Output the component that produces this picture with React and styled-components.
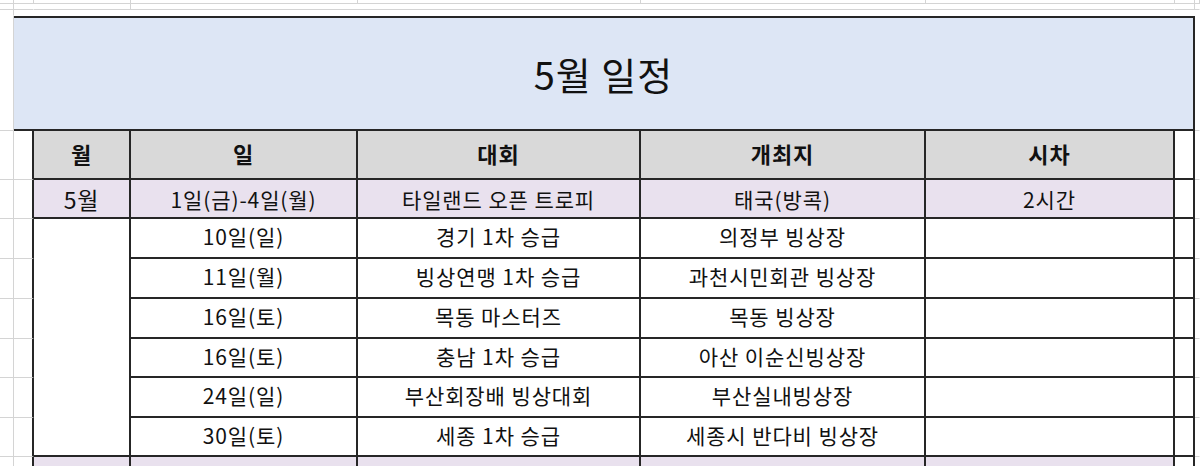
import React from 'react'
import styled, { createGlobalStyle } from 'styled-components'

const GlobalStyle = createGlobalStyle`
  html, body {
    margin: 0;
    padding: 0;
    background: #fff;
    overflow: hidden;
  }
  body {
    font-family: "Noto Sans CJK KR", "Noto Sans", sans-serif;
    color: #111;
  }
`;

const GRID = '#d4d4d4';
const LINE = '#262626';

const Sheet = styled.div`
  display: grid;
  width: 1200px;
  height: 466px;
  overflow: hidden;
  grid-template-columns: 14px 20px 97px 227px 283px 285px 249px 20px 1fr;
  grid-template-rows: 4px 6px 6px 115px 49px 39px 40px 40px 40px 39px 40px 39px 40px;
`;

const Cell = styled.div`
  box-sizing: border-box;
  display: flex;
  align-items: center;
  justify-content: center;
  min-width: 0;
  overflow: hidden;
  white-space: nowrap;
  padding-bottom: ${p => p.$lift || 0}px;
  background: ${p => p.$bg || '#fff'};
  border-right: ${p => (p.$r === LINE ? 2 : 1)}px solid ${p => p.$r || 'transparent'};
  border-bottom: ${p => (p.$b === LINE ? 2 : 1)}px solid ${p => p.$b || 'transparent'};
  grid-column: span ${p => p.$span || 1};
  grid-row: span ${p => p.$rows || 1};
  font-size: 21px;
  letter-spacing: 0.9px;
`;

const Title = styled(Cell)`
  border-top: 2px solid ${LINE};
  font-size: 38px;
  letter-spacing: 1px;
`;

const HeadCell = styled(Cell)`
  font-weight: 700;
  font-size: 22px;
  padding-bottom: 3px;
`;

const MonthCell = styled(Cell)`
  font-size: 23px;
`;

const headers = ['월', '일', '대회', '개최지', '시차'];

const schedule = [
  ['10일(일)', '경기 1차 승급', '의정부 빙상장'],
  ['11일(월)', '빙상연맹 1차 승급', '과천시민회관 빙상장'],
  ['16일(토)', '목동 마스터즈', '목동 빙상장'],
  ['16일(토)', '충남 1차 승급', '아산 이순신빙상장'],
  ['24일(일)', '부산회장배 빙상대회', '부산실내빙상장'],
  ['30일(토)', '세종 1차 승급', '세종시 반다비 빙상장'],
];

const HEAD_BG = '#d9d9d9';
const PURPLE = '#e9e1ee';
const BLUE = '#dde6f5';

// left gutter (A, B) and right gutter (H, I) around every table row
const Left = ({ edge }) => (
  <>
    <Cell $r={GRID} $b={GRID} />
    <Cell $r={edge ? LINE : undefined} $b={GRID} />
  </>
);

const Right = () => (
  <>
    <Cell $r={LINE} $b={LINE} />
    <Cell $b={GRID} />
  </>
);

export default function App() {
  return (
    <>
      <GlobalStyle />
      <Sheet>
        {/* spreadsheet strip above the title */}
        {Array.from({ length: 9 }).map((_, i) => (
          <Cell key={'a' + i} $r={GRID} $b={GRID} />
        ))}
        <Cell $r={GRID} $b={GRID} />
        <Cell $b={GRID} />
        <Cell $r={GRID} $b={GRID} />
        <Cell $span={4} $b={GRID} />
        <Cell $r={GRID} $b={GRID} />
        <Cell $b={GRID} />
        <Cell $r={GRID} />
        <Cell $span={7} />
        <Cell />

        {/* title */}
        <Cell $r={GRID} $b={GRID} />
        <Title $span={7} $bg={BLUE} $r={LINE} $b={LINE}>5월 일정</Title>
        <Cell $b={GRID} />

        {/* header */}
        <Left edge />
        {headers.map(h => (
          <HeadCell key={h} $bg={HEAD_BG} $r={LINE} $b={LINE}>{h}</HeadCell>
        ))}
        <Right />

        {/* first event */}
        <Left edge />
        <MonthCell $bg={PURPLE} $r={LINE} $b={LINE}>5월</MonthCell>
        <Cell $bg={PURPLE} $r={LINE} $b={LINE}>1일(금)-4일(월)</Cell>
        <Cell $bg={PURPLE} $r={LINE} $b={LINE}>타일랜드 오픈 트로피</Cell>
        <Cell $bg={PURPLE} $r={LINE} $b={LINE}>태국(방콕)</Cell>
        <Cell $bg={PURPLE} $r={LINE} $b={LINE}>2시간</Cell>
        <Right />

        {/* domestic events, month column merged */}
        {schedule.map(([day, name, place], i) => (
          <React.Fragment key={i}>
            <Left edge />
            {i === 0 && <Cell $rows={schedule.length} $r={LINE} $b={LINE} />}
            <Cell $lift={4} $r={LINE} $b={LINE}>{day}</Cell>
            <Cell $lift={4} $r={LINE} $b={LINE}>{name}</Cell>
            <Cell $lift={4} $r={LINE} $b={LINE}>{place}</Cell>
            <Cell $r={LINE} $b={LINE} />
            <Right />
          </React.Fragment>
        ))}

        {/* next month, cut off by the window */}
        <Left edge />
        <Cell $bg={PURPLE} $r={LINE} $b={LINE} />
        <Cell $bg={PURPLE} $r={LINE} $b={LINE} />
        <Cell $bg={PURPLE} $r={LINE} $b={LINE} />
        <Cell $bg={PURPLE} $r={LINE} $b={LINE} />
        <Cell $bg={PURPLE} $r={LINE} $b={LINE} />
        <Right />
      </Sheet>
    </>
  );
}
